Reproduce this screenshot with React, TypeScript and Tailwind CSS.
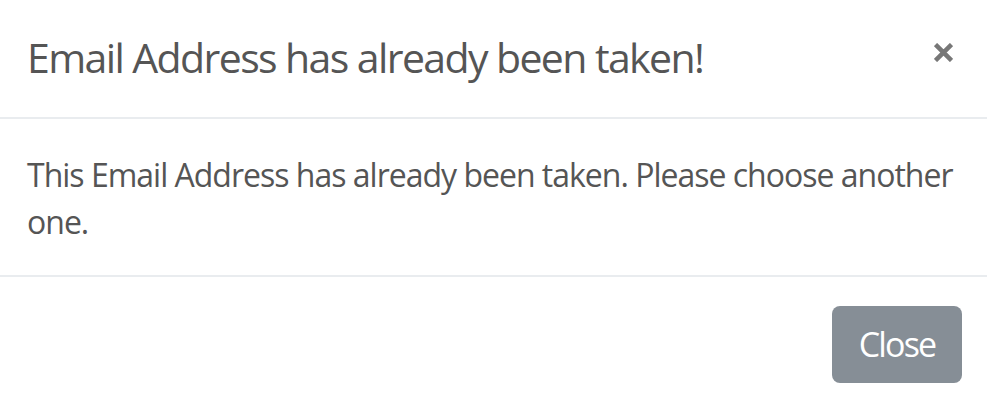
export default function App() {
  return (
    <div
      className="w-[987px] h-[411px] bg-white text-[#555555] overflow-hidden"
      style={{ fontFamily: '"Open Sans", "Noto Sans", sans-serif' }}
    >
      <div className="h-[119px] flex items-center justify-between pl-[27px] pr-[34px] border-b-2 border-[#e9ecef]">
        <h5 className="text-[41px] leading-[60px] font-normal tracking-[-1.6px] pb-[4px]">
          Email Address has already been taken!
        </h5>
        <button className="w-[19px] h-[19px] flex items-center justify-center mb-[12px]" aria-label="Close">
          <svg width="19" height="19" viewBox="0 0 19 19" className="block">
            <path d="M1.5 1.5 L17.5 17.5 M17.5 1.5 L1.5 17.5" stroke="#777777" strokeWidth="4.5" strokeLinecap="butt" />
          </svg>
        </button>
      </div>
      <div className="h-[158px] px-[27px] pt-[32px] border-b-2 border-[#e9ecef]">
        <p className="text-[32px] leading-[47px] tracking-[-1px]">
          This Email Address has already been taken. Please choose another one.
        </p>
      </div>
      <div className="flex justify-end pr-[25px] pt-[29px]">
        <button className="w-[130px] h-[77px] rounded-[8px] bg-[#868e96] text-white text-[34px] tracking-[-1.8px]">
          Close
        </button>
      </div>
    </div>
  );
}
